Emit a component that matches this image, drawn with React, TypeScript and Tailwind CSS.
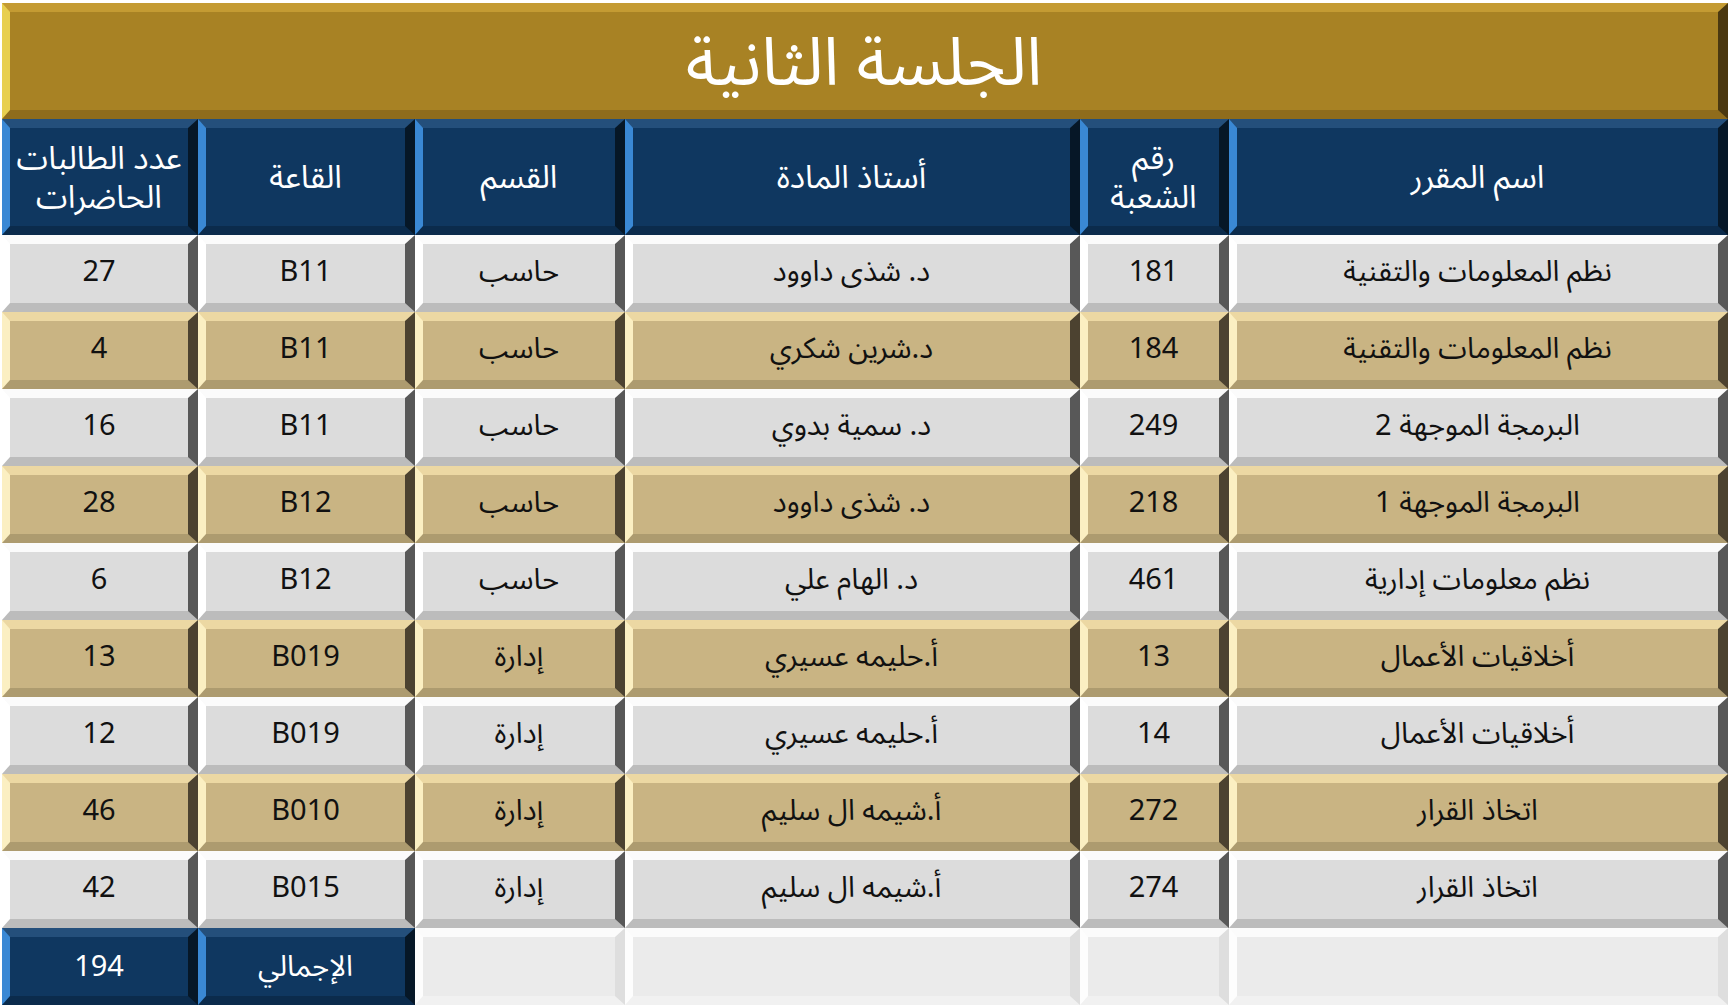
import type { JSX, ReactNode } from 'react';

type Tone = 'gold' | 'blue' | 'gray' | 'tan' | 'empty';

const tones: Record<Tone, string> = {
  gold: 'bg-[#a88224] border-t-[#c49b33] border-b-[#8f6c1c] border-l-[#e8cf4f] border-r-[#4a3810] text-white',
  blue: 'bg-[#0f3760] border-t-[#244f7b] border-b-[#0b2b4c] border-l-[#3a88d4] border-r-[#061727] text-white',
  gray: 'bg-[#dcdcdc] border-t-[#fbfbfb] border-b-[#bcbcbc] border-l-[#ffffff] border-r-[#585858] text-[#111]',
  tan: 'bg-[#c9b483] border-t-[#ecd8a3] border-b-[#ad9b6f] border-l-[#fbefc2] border-r-[#4c4230] text-[#111]',
  empty: 'bg-[#ebebeb] border-t-[#fbfbfb] border-b-[#f1f1f1] border-l-[#fdfdfd] border-r-[#dedede] text-[#111]',
};

function Cell({ tone, children, className = '' }: { tone: Tone; children?: ReactNode; className?: string }): JSX.Element {
  return (
    <div
      className={`flex items-center justify-center border-t-[9px] border-b-[9px] border-l-[8px] border-r-[10px] border-solid text-center ${tones[tone]} ${className}`}
    >
      {children}
    </div>
  );
}

const rows: string[][] = [
  ['نظم المعلومات والتقنية', '181', 'د. شذى داوود', 'حاسب', 'B11', '27'],
  ['نظم المعلومات والتقنية', '184', 'د.شرين شكري', 'حاسب', 'B11', '4'],
  ['البرمجة الموجهة 2', '249', 'د. سمية بدوي', 'حاسب', 'B11', '16'],
  ['البرمجة الموجهة 1', '218', 'د. شذى داوود', 'حاسب', 'B12', '28'],
  ['نظم معلومات إدارية', '461', 'د. الهام علي', 'حاسب', 'B12', '6'],
  ['أخلاقيات الأعمال', '13', 'أ.حليمه عسيري', 'إدارة', 'B019', '13'],
  ['أخلاقيات الأعمال', '14', 'أ.حليمه عسيري', 'إدارة', 'B019', '12'],
  ['اتخاذ القرار', '272', 'أ.شيمه ال سليم', 'إدارة', 'B010', '46'],
  ['اتخاذ القرار', '274', 'أ.شيمه ال سليم', 'إدارة', 'B015', '42'],
];

const headers: ReactNode[] = [
  'اسم المقرر',
  <>رقم<br />الشعبة</>,
  'أستاذ المادة',
  'القسم',
  'القاعة',
  <>عدد الطالبات<br />الحاضرات</>,
];

const cols = 'grid grid-cols-[499px_149px_455px_210px_217px_196px]';

export default function App(): JSX.Element {
  return (
    <div
      dir="rtl"
      className="flex w-[1731px] flex-col bg-white pt-[3px] pr-[3px] pl-[2px]"
      style={{ fontFamily: '"Noto Sans", "Noto Sans Arabic", "DejaVu Sans", sans-serif' }}
    >
      <Cell tone="gold" className="h-[116px] pb-[4px] text-[67px] leading-none">
        الجلسة الثانية
      </Cell>
      <div className={`${cols} h-[116px] text-[32px] leading-[1.22]`}>
        {headers.map((h, i) => (
          <Cell key={i} tone="blue" className="pb-[2px]">
            {h}
          </Cell>
        ))}
      </div>
      {rows.map((row, r) => (
        <div key={r} className={`${cols} h-[77px] text-[29px] leading-none`}>
          {row.map((v, c) => (
            <Cell key={c} tone={r % 2 === 0 ? 'gray' : 'tan'} className="pb-[9px]">
              {v}
            </Cell>
          ))}
        </div>
      ))}
      <div className={`${cols} h-[77px] text-[29px] leading-none`}>
        <Cell tone="empty" />
        <Cell tone="empty" />
        <Cell tone="empty" />
        <Cell tone="empty" />
        <Cell tone="blue" className="pb-[4px]">الإجمالي</Cell>
        <Cell tone="blue" className="pb-[4px]">194</Cell>
      </div>
    </div>
  );
}
